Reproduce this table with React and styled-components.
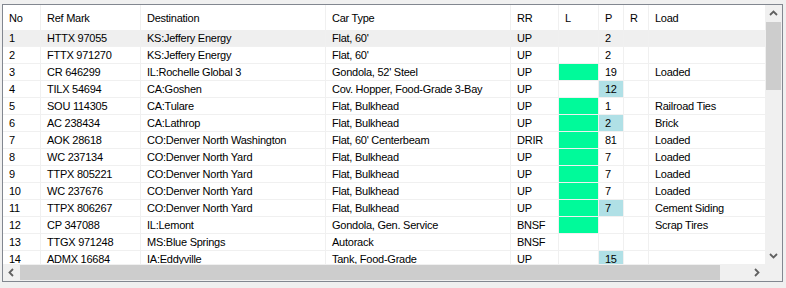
import styled, { createGlobalStyle } from 'styled-components'

const Global = createGlobalStyle`
  body {
    margin: 0;
    background: #f0f0f0;
    font-family: "Liberation Sans", Arial, sans-serif;
  }
`

const COLS = '38px 100px 185px 185px 48px 40px 25px 25px 145px'

const Page = styled.div`
  padding: 4px 0 0 2px;
`

const Frame = styled.div`
  width: 781px;
  height: 278px;
  box-sizing: border-box;
  border: 1px solid #828790;
  display: grid;
  grid-template-columns: 1fr 17px;
  grid-template-rows: 1fr 17px;
  background: #f0f0f0;
`

const Viewport = styled.div`
  background: #fff;
  overflow: hidden;
`

const Row = styled.div`
  display: grid;
  grid-template-columns: ${COLS};
  width: max-content;
  height: ${p => (p.$header ? '25px' : '17px')};
  background: ${p => (p.$selected ? '#efefef' : '#fff')};
`

const Cell = styled.div`
  box-sizing: border-box;
  border-right: 1px solid #f0f0f0;
  border-bottom: ${p => (p.$header ? 'none' : '1px solid #f0f0f0')};
  padding: 0 3px 0 6px;
  font-size: 11px;
  letter-spacing: -0.25px;
  line-height: ${p => (p.$header ? '26px' : '16px')};
  color: #000;
  white-space: nowrap;
  overflow: hidden;
  background: ${p => p.$fill || 'transparent'};
`

const VScroll = styled.div`
  display: flex;
  flex-direction: column;
  background: #f0f0f0;
`

const HScroll = styled.div`
  display: flex;
  background: #f0f0f0;
`

const Arrow = styled.div`
  flex: 0 0 17px;
  height: 17px;
  display: flex;
  align-items: center;
  justify-content: center;
`

const VTrack = styled.div`
  flex: 1;
  padding: 0 1px;
`

const VThumb = styled.div`
  height: 68px;
  background: #cdcdcd;
`

const HTrack = styled.div`
  flex: 1;
  padding: 1px 0;
`

const HThumb = styled.div`
  width: 700px;
  height: 100%;
  background: #cdcdcd;
`

const Corner = styled.div`
  background: #f0f0f0;
`

const Chevron = ({ dir }) => {
  const rot = { up: 0, down: 180, left: -90, right: 90 }[dir]
  return (
    <svg width="9" height="9" viewBox="0 0 9 9" style={{ transform: `rotate(${rot}deg)` }}>
      <polyline points="1,6 4.5,2.5 8,6" fill="none" stroke="#606060" strokeWidth="1.8" />
    </svg>
  )
}

const GREEN = '#00fa9a'
const BLUE = '#b0e0e6'

const headers = ['No', 'Ref Mark', 'Destination', 'Car Type', 'RR', 'L', 'P', 'R', 'Load']

const cars = [
  ['HTTX 97055', 'KS:Jeffery Energy', "Flat, 60'", 'UP', false, '2', false, ''],
  ['FTTX 971270', 'KS:Jeffery Energy', "Flat, 60'", 'UP', false, '2', false, ''],
  ['CR 646299', 'IL:Rochelle Global 3', "Gondola, 52' Steel", 'UP', true, '19', false, 'Loaded'],
  ['TILX 54694', 'CA:Goshen', 'Cov. Hopper, Food-Grade 3-Bay', 'UP', false, '12', true, ''],
  ['SOU 114305', 'CA:Tulare', 'Flat, Bulkhead', 'UP', true, '1', false, 'Railroad Ties'],
  ['AC 238434', 'CA:Lathrop', 'Flat, Bulkhead', 'UP', true, '2', true, 'Brick'],
  ['AOK 28618', 'CO:Denver North Washington', "Flat, 60' Centerbeam", 'DRIR', true, '81', false, 'Loaded'],
  ['WC 237134', 'CO:Denver North Yard', 'Flat, Bulkhead', 'UP', true, '7', false, 'Loaded'],
  ['TTPX 805221', 'CO:Denver North Yard', 'Flat, Bulkhead', 'UP', true, '7', false, 'Loaded'],
  ['WC 237676', 'CO:Denver North Yard', 'Flat, Bulkhead', 'UP', true, '7', false, 'Loaded'],
  ['TTPX 806267', 'CO:Denver North Yard', 'Flat, Bulkhead', 'UP', true, '7', true, 'Cement Siding'],
  ['CP 347088', 'IL:Lemont', 'Gondola, Gen. Service', 'BNSF', true, '', false, 'Scrap Tires'],
  ['TTGX 971248', 'MS:Blue Springs', 'Autorack', 'BNSF', false, '', false, ''],
  ['ADMX 16684', 'IA:Eddyville', 'Tank, Food-Grade', 'UP', false, '15', true, ''],
]

const App = () => {
  return (
    <>
      <Global />
      <Page>
        <Frame>
          <Viewport>
            <Row $header>
              {headers.map(h => (
                <Cell key={h} $header>{h}</Cell>
              ))}
            </Row>
            {cars.map(([mark, dest, type, rr, loaded, p, pHi, load], i) => (
              <Row key={mark} $selected={i === 0}>
                <Cell>{i + 1}</Cell>
                <Cell>{mark}</Cell>
                <Cell>{dest}</Cell>
                <Cell>{type}</Cell>
                <Cell>{rr}</Cell>
                <Cell $fill={loaded ? GREEN : null} />
                <Cell $fill={pHi ? BLUE : null}>{p}</Cell>
                <Cell />
                <Cell>{load}</Cell>
              </Row>
            ))}
          </Viewport>
          <VScroll>
            <Arrow><Chevron dir="up" /></Arrow>
            <VTrack><VThumb /></VTrack>
            <Arrow><Chevron dir="down" /></Arrow>
          </VScroll>
          <HScroll>
            <Arrow><Chevron dir="left" /></Arrow>
            <HTrack><HThumb /></HTrack>
            <Arrow><Chevron dir="right" /></Arrow>
          </HScroll>
          <Corner />
        </Frame>
      </Page>
    </>
  )
}

export default App
